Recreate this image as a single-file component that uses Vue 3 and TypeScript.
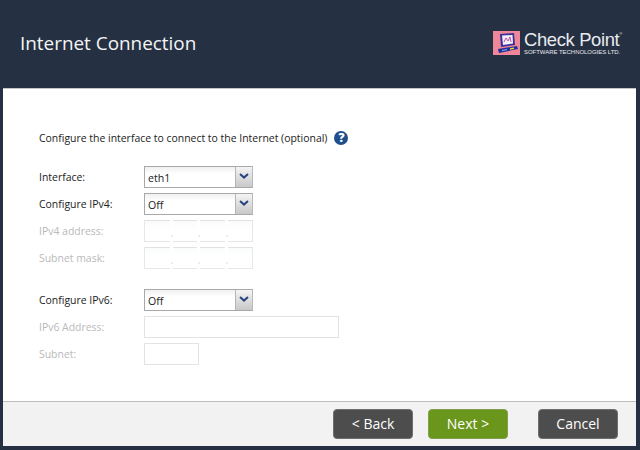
<script setup lang="ts">
const octets = [1, 2, 3, 4]
</script>

<template>
  <div class="window">
    <header class="head">
      <h1 class="title">Internet Connection</h1>
      <div class="logo">
        <svg class="mark" width="27" height="24" viewBox="0 0 27 24">
          <rect width="27" height="24" fill="#ef8699" />
          <path d="M7 3 L21 2 L22 14 L8 16 Z" fill="#3b2f9a" />
          <path d="M9 4.5 L19.5 4 L20 12.5 L10 14 Z" fill="#f3eef8" />
          <path d="M11 11 L13 7 L15 10 L17 6 L18 11" fill="none" stroke="#b455b0" stroke-width="1" />
          <path d="M5 18 L24 15 L25 18 L6 22 Z" fill="#1f2f9c" />
          <path d="M17 18 L21 17.2" stroke="#e8d23a" stroke-width="1.4" />
          <path d="M9 19.5 L14 18.6" stroke="#9fb2ee" stroke-width="1" />
        </svg>
        <div class="brand">
          <div class="brand-name"><span>Check Point</span><sup class="reg">®</sup></div>
          <div class="brand-sub">SOFTWARE TECHNOLOGIES LTD.</div>
        </div>
      </div>
    </header>

    <main class="body">
      <div class="intro">
        <span>Configure the interface to connect to the Internet (optional)</span>
        <span class="help">?</span>
      </div>

      <div class="form">
        <div class="row">
          <label class="label">Interface:</label>
          <div class="select">
            <span class="value">eth1</span>
            <span class="arrow"><svg width="10" height="6" viewBox="0 0 10 6"><path d="M1 1 L5 4.6 L9 1" fill="none" stroke="#27457f" stroke-width="2" /></svg></span>
          </div>
        </div>
        <div class="row">
          <label class="label">Configure IPv4:</label>
          <div class="select">
            <span class="value">Off</span>
            <span class="arrow"><svg width="10" height="6" viewBox="0 0 10 6"><path d="M1 1 L5 4.6 L9 1" fill="none" stroke="#27457f" stroke-width="2" /></svg></span>
          </div>
        </div>
        <div class="row">
          <label class="label off">IPv4 address:</label>
          <div class="octets"><span v-for="o in octets" :key="o" class="octet"></span></div>
        </div>
        <div class="row">
          <label class="label off">Subnet mask:</label>
          <div class="octets"><span v-for="o in octets" :key="o" class="octet"></span></div>
        </div>

        <div class="row spaced">
          <label class="label">Configure IPv6:</label>
          <div class="select">
            <span class="value">Off</span>
            <span class="arrow"><svg width="10" height="6" viewBox="0 0 10 6"><path d="M1 1 L5 4.6 L9 1" fill="none" stroke="#27457f" stroke-width="2" /></svg></span>
          </div>
        </div>
        <div class="row">
          <label class="label off">IPv6 Address:</label>
          <span class="input wide"></span>
        </div>
        <div class="row">
          <label class="label off">Subnet:</label>
          <span class="input short"></span>
        </div>
      </div>
    </main>

    <footer class="foot">
      <button class="btn back">&lt; Back</button>
      <button class="btn next">Next &gt;</button>
      <button class="btn cancel">Cancel</button>
    </footer>
  </div>
</template>

<style>
html, body { margin: 0; padding: 0; background: #253042; }
</style>

<style scoped>
.window {
  width: 640px;
  height: 450px;
  box-sizing: border-box;
  background: #253042;
  padding: 0 4px 4px 3px;
  display: flex;
  flex-direction: column;
  font-family: "Open Sans", "Liberation Sans", sans-serif;
  overflow: hidden;
}
.head {
  height: 88px;
  margin: 0 -4px 0 -3px;
  padding: 0 20px 0 20px;
  flex: none;
  display: flex;
  align-items: center;
  justify-content: space-between;
  box-sizing: border-box;
}
.title {
  margin: 0 0 2px;
  font-size: 18.9px;
  font-weight: 400;
  color: #f4f5f6;
}
.logo {
  display: flex;
  align-items: flex-start;
  gap: 4px;
  margin-top: -2px;
}
.mark { display: block; }
.brand { color: #e9ebee; font-family: "Liberation Sans", Arial, sans-serif; width: 96px; }
.brand-name { font-size: 18.4px; line-height: 17px; letter-spacing: -0.35px; display: flex; white-space: nowrap; }
.reg { font-size: 4px; line-height: 6px; margin-left: 0; letter-spacing: 0; }
.brand-sub { font-size: 5.95px; line-height: 7px; margin-top: 1px; white-space: nowrap; }
.body {
  flex: 1;
  background: #fff;
  border-top: 1px solid #c4c4c4;
  border-bottom: 1px solid #bdbdbd;
  padding: 39px 0 0 36px;
  min-height: 0;
}
.intro {
  display: flex;
  align-items: center;
  gap: 6px;
  height: 20px;
  font-size: 10.45px;
  color: #222;
}
.help {
  width: 14px;
  height: 14px;
  border-radius: 50%;
  background: #1f4e8c;
  color: #fff;
  font-size: 12px;
  font-weight: 800;
  line-height: 14px;
  text-align: center;
  margin-left: 1px;
}
.form {
  margin-top: 18px;
  display: flex;
  flex-direction: column;
  gap: 5px;
}
.row {
  display: flex;
  align-items: center;
  height: 22px;
}
.row.spaced { margin-top: 15px; }
.label {
  width: 105px;
  font-size: 10.45px;
  color: #222;
}
.label.off { color: #b9b9b9; }
.select {
  width: 109px;
  height: 22px;
  box-sizing: border-box;
  display: flex;
  border: 1px solid #a9a9a9;
  border-right-color: #b5b9c8;
  background: linear-gradient(#f0f0f0, #fff 35%);
}
.value {
  flex: 1;
  font-size: 10.6px;
  line-height: 22px;
  padding-left: 3px;
  color: #222;
}
.arrow {
  width: 17px;
  flex: none;
  border-left: 1px solid #b5b5b5;
  background: linear-gradient(#f4f4f4, #c8c8c8);
  display: flex;
  justify-content: center;
  padding-top: 6px;
  box-sizing: border-box;
}
.arrow svg { display: block; }
.octets {
  width: 109px;
  height: 22px;
  display: flex;
  gap: 3px;
}
.octet {
  position: relative;
  flex: 1;
  box-sizing: border-box;
  border-top: 1px solid #e2e2e2;
  border-bottom: 1px solid #e6e6e6;
  background: linear-gradient(#fafbfb, #fff 40%);
}
.octet:first-child { border-left: 1px solid #e6e6ee; }
.octet:last-child { border-right: 1px solid #e6e6ee; }
.octet + .octet::before {
  content: "";
  position: absolute;
  left: -2px;
  top: 14px;
  width: 2px;
  height: 2px;
  background: #ececec;
}
.input {
  display: block;
  box-sizing: border-box;
  height: 22px;
  border: 1px solid #e3e3e3;
  background: #fff;
}
.wide { width: 195px; }
.short { width: 55px; }
.foot {
  height: 44px;
  flex: none;
  background: #f2f2f2;
  display: flex;
  align-items: flex-start;
  padding: 7px 0 0 330px;
  box-sizing: border-box;
}
.btn {
  width: 80px;
  height: 30px;
  box-sizing: border-box;
  border: 1px solid #6f6f6f;
  border-radius: 4px;
  background: #4d4d4d;
  color: #fff;
  font-family: inherit;
  font-size: 14px;
  padding: 0 0 2px;
}
.next { margin-left: 15px; background: #6a961c; border-color: #80a050; }
.cancel { margin-left: 30px; }
</style>
